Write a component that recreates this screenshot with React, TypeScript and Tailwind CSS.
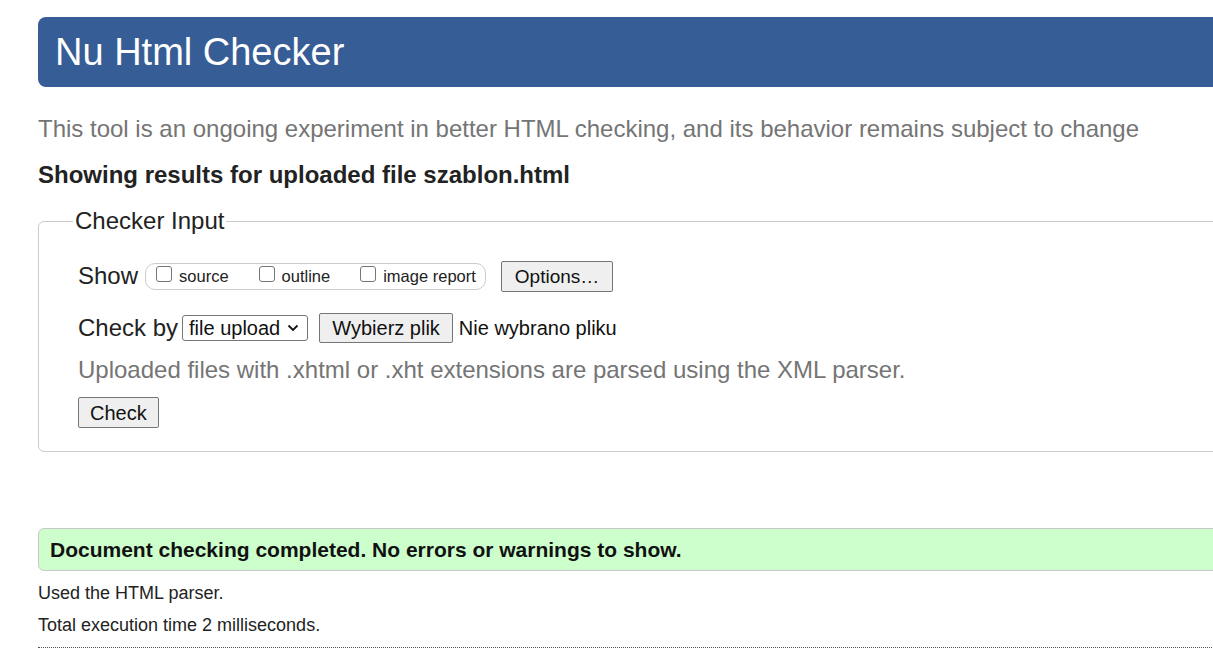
import React from "react";

const Box = ({ label }: { label: string }) => (
  <span className="flex items-center">
    <span className="w-[16px] h-[16px] border border-[#767676] rounded-[3px] bg-white inline-block mr-[7px] -mt-[5px]" />
    <span className="text-[16.5px] leading-[20px] text-[#222]">{label}</span>
  </span>
);

export default function App() {
  return (
    <div
      className="w-[1213px] h-[663px] overflow-hidden bg-white text-[#222]"
      style={{ fontFamily: '"Liberation Sans", Arial, sans-serif' }}
    >
      <div className="ml-[38px] w-[1400px]">
        <div className="mt-[17px] h-[70px] rounded-[8px] bg-[#365d95] flex items-center pl-[17px]">
          <h1 className="text-white text-[38px] leading-none -mt-[1px]">Nu Html Checker</h1>
        </div>
        <p className="mt-[28px] text-[24px] leading-[28px] text-[#757575]">
          This tool is an ongoing experiment in better HTML checking, and its behavior remains subject to change
        </p>
        <p className="mt-[18px] text-[24px] leading-[28px] font-bold text-[#222]">
          Showing results for uploaded file szablon.html
        </p>
        <fieldset className="mt-[18px] border border-[#cccccc] rounded-[6px] px-0 pb-[23px] pt-0 w-[1300px]">
          <legend className="ml-[34px] px-[2px] text-[24px] leading-[28px] text-[#222]">Checker Input</legend>
          <div className="pl-[39px]">
            <div className="mt-[25px] flex items-center h-[32px]">
              <span className="text-[24px] mr-[7px]">Show</span>
              <div className="h-[27px] border border-[#cccccc] rounded-[10px] flex items-center pl-[10px] pr-[9px] gap-[30px]">
                <Box label="source" />
                <Box label="outline" />
                <Box label="image report" />
              </div>
              <button className="ml-[15px] h-[31px] px-[13px] bg-[#efefef] border border-[#767676] rounded-[2px] text-[19px] leading-none text-[#111]">
                Options…
              </button>
            </div>
            <div className="mt-[20px] flex items-center h-[31px]">
              <span className="text-[24px] mr-[4px]">Check by</span>
              <span className="h-[26px] border border-[#767676] rounded-[3px] flex items-center pl-[6px] pr-[8px] text-[20px] text-[#111]">
                file upload
                <svg width="12" height="8" viewBox="0 0 12 8" className="ml-[7px]">
                  <path d="M1.5 1.5 L6 6 L10.5 1.5" stroke="#111" strokeWidth="1.8" fill="none" />
                </svg>
              </span>
              <button className="ml-[11px] h-[30px] px-[12px] bg-[#efefef] border border-[#767676] rounded-[2px] text-[20px] leading-none text-[#111]">
                Wybierz plik
              </button>
              <span className="ml-[6px] text-[20px] text-[#111]">Nie wybrano pliku</span>
            </div>
            <p className="mt-[13px] text-[24px] leading-[28px] text-[#757575]">
              Uploaded files with .xhtml or .xht extensions are parsed using the XML parser.
            </p>
            <button className="mt-[13px] h-[31px] px-[11px] bg-[#efefef] border border-[#767676] rounded-[2px] text-[20px] leading-none text-[#111]">
              Check
            </button>
          </div>
        </fieldset>
        <div className="mt-[76px] h-[43px] w-[1300px] bg-[#ccffcc] border border-[#c8c8c8] rounded-[6px] flex items-center pl-[11px]">
          <span className="text-[21px] font-bold text-[#111]">Document checking completed. No errors or warnings to show.</span>
        </div>
        <p className="mt-[12px] text-[18px] leading-[20px] text-[#222]">Used the HTML parser.</p>
        <p className="mt-[12px] text-[18px] leading-[20px] text-[#222]">Total execution time 2 milliseconds.</p>
        <div className="mt-[12px] border-t border-dotted border-[#555] w-[1300px]" />
      </div>
    </div>
  );
}
